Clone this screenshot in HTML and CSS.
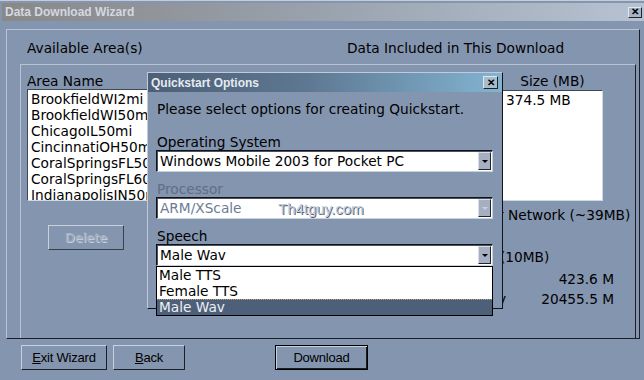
FILE: index.html
```html
<!DOCTYPE html>
<html lang="en">
<head>
    <meta charset="UTF-8">
    <meta name="viewport" content="width=device-width, initial-scale=1.0">
    <title>Data Download Wizard</title>
    <link rel="stylesheet" href="styles.css">
</head>
<body>
    <div class="window">
        <div class="titlebar">
            <span class="title">Data Download Wizard</span>
            <span class="close-btn">&#x2715;</span>
        </div>

        <div class="frame">
            <div class="frame-head">
                <span>Available Area(s)</span>
                <span>Data Included in This Download</span>
            </div>

            <div class="inner">
                <div class="col-left">
                    <div class="label">Area Name</div>
                    <ul class="listbox area-list">
                        <li>BrookfieldWI2mi</li>
                        <li>BrookfieldWI50mi</li>
                        <li>ChicagoIL50mi</li>
                        <li>CincinnatiOH50mi</li>
                        <li>CoralSpringsFL50mi</li>
                        <li>CoralSpringsFL60mi</li>
                        <li>IndianapolisIN50mi</li>
                    </ul>
                    <button class="btn btn-disabled delete-btn">Delete</button>
                </div>

                <div class="col-right">
                    <div class="label size-label">Size (MB)</div>
                    <ul class="listbox size-list">
                        <li>374.5 MB</li>
                    </ul>
                    <div class="row row-network">r Network (~39MB)</div>
                    <div class="row row-ten">(10MB)</div>
                    <div class="row row-num"><span></span><span>423.6 M</span></div>
                    <div class="row row-num row-last"><span>y</span><span>20455.5 M</span></div>
                </div>
            </div>
        </div>

        <div class="button-row">
            <button class="btn exit-btn"><u>E</u>xit Wizard</button>
            <button class="btn back-btn"><u>B</u>ack</button>
            <button class="btn btn-default download-btn">Download</button>
        </div>
    </div>

    <!-- Quickstart dialog sits on top of the wizard -->
    <div class="dialog">
        <div class="dialog-title">
            <span>Quickstart Options</span>
            <span class="close-btn dialog-close">&#x2715;</span>
        </div>
        <div class="dialog-body">
            <p class="intro">Please select options for creating Quickstart.</p>

            <div class="field-label">Operating System</div>
            <div class="select">
                <span class="select-value">Windows Mobile 2003 for Pocket PC</span>
                <span class="select-arrow"></span>
            </div>

            <div class="field-label disabled">Processor</div>
            <div class="select select-disabled">
                <span class="select-value">ARM/XScale</span>
                <span class="select-arrow"></span>
            </div>

            <div class="field-label">Speech</div>
            <div class="select select-open">
                <span class="select-value">Male Wav</span>
                <span class="select-arrow"></span>
                <ul class="dropdown">
                    <li>Male TTS</li>
                    <li>Female TTS</li>
                    <li class="selected">Male Wav</li>
                </ul>
            </div>

            <span class="watermark">Th4tguy.com</span>
        </div>
    </div>
</body>
</html>
```

FILE: styles.css
```css
body {
    margin: 0;
    width: 644px;
    height: 380px;
    overflow: hidden;
    position: relative;
    background-color: #8495af;
    font-family: 'DejaVu Sans', Verdana, sans-serif;
    font-size: 13.7px;
    color: #000;
}
ul {
    list-style: none;
    margin: 0;
    padding: 0;
}
.window {
    height: 380px;
    box-sizing: border-box;
    border-top: 1px solid #c4ccd8;
    padding-top: 2px;
    display: flex;
    flex-direction: column;
}
.titlebar {
    height: 18px;
    margin-left: 2px;
    padding-left: 3px;
    padding-right: 2px;
    display: flex;
    justify-content: space-between;
    align-items: center;
    background: linear-gradient(to right, #888888, #9aa2ae 50%, #b6c2d2);
}
.title {
    font-family: 'Liberation Sans', Arial, sans-serif;
    font-size: 12px;
    font-weight: bold;
    color: #d4d8e0;
}
.close-btn {
    width: 14px;
    height: 11px;
    box-sizing: border-box;
    display: flex;
    align-items: center;
    justify-content: center;
    font-family: 'Liberation Sans', Arial, sans-serif;
    font-size: 10px;
    font-weight: bold;
    line-height: 1;
    color: #000;
    background-color: #a8b4c6;
    border: 1px solid;
    border-color: #e0e6ee #202428 #202428 #e0e6ee;
}
.frame {
    margin: 8px 4px 0 6px;
    height: 310px;
    box-sizing: border-box;
    border: 1px solid;
    border-color: #b8c4d4 #1c1f24 #1c1f24 #b8c4d4;
    display: flex;
    flex-direction: column;
}
.frame-head {
    height: 34px;
    display: grid;
    grid-template-columns: 320px 1fr;
    align-items: center;
    padding-left: 20px;
    padding-top: 1px;
    box-sizing: border-box;
}
.inner {
    flex: 1;
    margin-left: 13px;
    margin-right: 3px;
    border-top: 1px solid #b8c4d4;
    border-left: 1px solid #b8c4d4;
    border-right: 1px solid #1c1f24;
    display: grid;
    grid-template-columns: 476px minmax(0, 1fr);
    padding-top: 8px;
}
.label {
    line-height: 16px;
}
.col-left {
    padding-left: 6px;
    display: flex;
    flex-direction: column;
    align-items: flex-start;
}
.listbox {
    background-color: #fff;
    box-sizing: border-box;
    border: 1px solid;
    border-color: #404652 #d0d8e2 #d0d8e2 #404652;
    overflow: hidden;
    line-height: 16px;
    padding: 1px 3px;
    white-space: nowrap;
}
.area-list {
    width: 160px;
    height: 112px;
}
.delete-btn {
    margin-top: 24px;
    margin-left: 21px;
    width: 76px;
}
.col-right {
    display: flex;
    flex-direction: column;
    padding-right: 21px;
    min-width: 0;
}
.size-label {
    width: 101px;
    margin-left: 5px;
    text-align: center;
}
.size-list {
    width: 101px;
    height: 111px;
    margin-left: 5px;
    margin-top: 1px;
}
.row {
    line-height: 16px;
    padding-left: 1px;
    white-space: nowrap;
}
.row-network {
    margin-top: 6px;
}
.row-ten {
    margin-top: 26px;
    padding-left: 3px;
}
.row-num {
    display: flex;
    justify-content: space-between;
    margin-top: 6px;
}
.row-last {
    margin-top: 4px;
}
.button-row {
    display: flex;
    padding-left: 21px;
    margin-top: 6px;
    gap: 6px;
}
.btn {
    height: 25px;
    box-sizing: border-box;
    background-color: #8495af;
    border: 1px solid;
    border-color: #c8d0dc #1c1f24 #1c1f24 #c8d0dc;
    font-family: 'Liberation Sans', Arial, sans-serif;
    font-size: 13px;
    color: #000;
    padding: 0;
    letter-spacing: -0.2px;
}
.btn-disabled {
    font-family: 'DejaVu Sans', Verdana, sans-serif;
    letter-spacing: 0;
    color: #a4b0c2;
    text-shadow: 1px 1px 0 #c4ccd8;
    border-color: #c8d0dc #3a4048 #3a4048 #c8d0dc;
}
.exit-btn {
    width: 86px;
}
.back-btn {
    width: 72px;
}
.download-btn {
    width: 93px;
    margin-left: 84px;
    border: 1px solid #000;
    box-shadow: inset 1px 1px 0 #c8d0dc, inset -1px -1px 0 #1c1f24;
}

/* dialog */
.dialog {
    position: absolute;
    left: 147px;
    top: 72px;
    width: 356px;
    height: 237px;
    box-sizing: border-box;
    background-color: #8495af;
    border: 1px solid;
    border-color: #c0cad8 #101214 #101214 #c0cad8;
    z-index: 2;
}
.dialog-title {
    height: 19px;
    display: flex;
    align-items: center;
    justify-content: space-between;
    padding-left: 3px;
    padding-right: 4px;
    font-family: 'Liberation Sans', Arial, sans-serif;
    font-size: 12px;
    font-weight: bold;
    color: #e6eaf0;
    background: linear-gradient(to right, #4c5f77, #5e7892 45%, #82b4d2);
}
.dialog-close {
    width: 15px;
    height: 13px;
    background-color: #a8bccc;
}
.dialog-body {
    position: relative;
    padding: 9px 0 0 8px;
}
.intro {
    margin: 0 0 17px 1px;
    line-height: 16px;
}
.field-label {
    line-height: 16px;
    padding-left: 1px;
}
.field-label.disabled {
    color: #5e6e86;
}
.select {
    position: relative;
    width: 337px;
    height: 22px;
    box-sizing: border-box;
    background-color: #fff;
    border: 1px solid;
    border-color: #101214 #c8d0dc #c8d0dc #101214;
    box-shadow: inset 1px 1px 0 #4a5262;
    display: flex;
    align-items: center;
    margin-bottom: 9px;
}
.select-value {
    flex: 1;
    padding-left: 3px;
    line-height: 16px;
}
.select-arrow {
    width: 13px;
    height: 18px;
    margin-right: 1px;
    box-sizing: border-box;
    background-color: #a4b0c2;
    border: 1px solid;
    border-color: #d8dee8 #202428 #202428 #d8dee8;
    position: relative;
}
.select-arrow::after {
    content: '';
    position: absolute;
    left: 3px;
    top: 7px;
    border-left: 3px solid transparent;
    border-right: 3px solid transparent;
    border-top: 3px solid #000;
}
.select-disabled .select-value {
    color: #6c7c94;
}
.select-disabled .select-arrow::after {
    border-top-color: #c8d0dc;
}
.select-open {
    margin-bottom: 0;
}
.dropdown {
    position: absolute;
    left: -1px;
    top: 21px;
    width: 337px;
    box-sizing: border-box;
    background-color: #fff;
    border: 1px solid #000;
    line-height: 16px;
    z-index: 3;
}
.dropdown li {
    height: 16px;
    padding-left: 2px;
}
.dropdown .selected {
    background-color: #4e6079;
    color: #eef0f4;
    box-sizing: border-box;
    border-top: 1px dotted #b8a070;
    line-height: 14px;
}
.watermark {
    position: absolute;
    left: 130px;
    top: 108px;
    font-family: 'Liberation Sans', Arial, sans-serif;
    font-size: 15px;
    color: #c4ccd8;
    text-shadow: 1px 1px 0 #56627a;
}
```
